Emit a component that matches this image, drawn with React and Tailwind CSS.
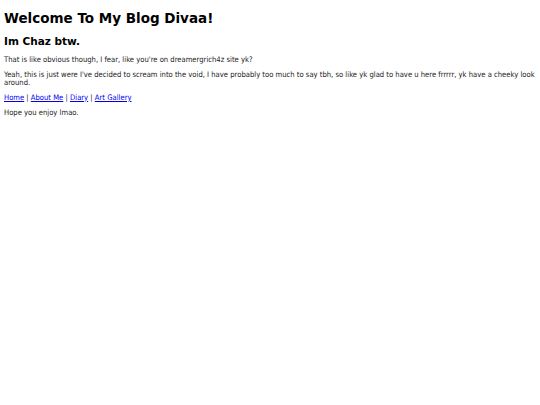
export default function App() {
  return (
    <div className="min-h-[405px] bg-white px-[4px] pt-[10px] text-[#222] font-['DejaVu_Sans',Verdana,sans-serif]">
      <h1 className="text-[13.5px] leading-[16px] font-bold text-black">Welcome To My Blog Divaa!</h1>
      <h2 className="mt-[9px] text-[10.5px] leading-[13px] font-bold text-black">Im Chaz btw.</h2>
      <div className="font-['DejaVu_Sans_Condensed','DejaVu_Sans',sans-serif] [font-stretch:condensed]">
        <p className="mt-[7px] text-[7.6px] leading-[9px]">That is like obvious though, I fear, like you're on dreamergrich4z site yk?</p>
        <p className="mt-[7px] text-[7.6px] leading-[8px]">Yeah, this is just were I've decided to scream into the void, I have probably too much to say tbh, so like yk glad to have u here frrrrr, yk have a cheeky look around.</p>
        <p className="mt-[6px] text-[7.6px] leading-[9px]">
          <a href="#" className="text-[#0000ee] underline">Home</a> | <a href="#" className="text-[#0000ee] underline">About Me</a> | <a href="#" className="text-[#0000ee] underline">Diary</a> | <a href="#" className="text-[#0000ee] underline">Art Gallery</a>
        </p>
        <p className="mt-[6px] text-[7.6px] leading-[9px]">Hope you enjoy lmao.</p>
      </div>
    </div>
  );
}
